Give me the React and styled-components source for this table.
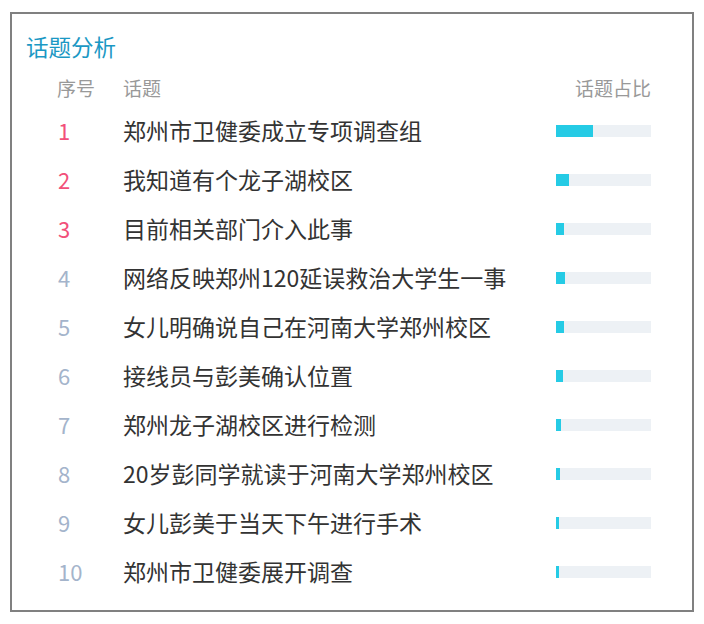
import React from "react";
import styled, { createGlobalStyle } from "styled-components";

const Global = createGlobalStyle`
  html, body { margin: 0; padding: 0; background: #fff; }
  body { font-family: "Noto Sans CJK SC", "Noto Sans", sans-serif; }
`;

const Card = styled.div`
  box-sizing: border-box;
  margin: 12px 0 0 10px;
  width: 684px;
  height: 600px;
  border: 2px solid #808080;
  padding: 17px 41px 0 14px;
  background: #fff;
`;

const Title = styled.h2`
  margin: 0;
  font-size: 22.5px;
  line-height: 30px;
  font-weight: 400;
  color: #1b98c4;
`;

const Table = styled.div`
  margin-top: 13px;
  padding-left: 31px;
`;

const Row = styled.div`
  display: grid;
  grid-template-columns: 66px 1fr 95px;
  align-items: center;
  height: ${(p) => (p.$head ? "28px" : "49px")};
  margin-bottom: ${(p) => (p.$head ? "3px" : "0")};
`;

const HeadCell = styled.div`
  font-size: 19px;
  line-height: 28px;
  color: #999;
  white-space: nowrap;
  text-align: ${(p) => (p.$right ? "right" : "left")};
`;

const Num = styled.div`
  font-size: 22px;
  color: ${(p) => (p.$top ? "#f2507a" : "#a4b4cb")};
  padding-left: 1px;
`;

const Topic = styled.div`
  font-size: 23px;
  color: #333;
  white-space: nowrap;
`;

const Track = styled.div`
  height: 12px;
  margin-top: 2px;
  background: #edf1f5;
  display: flex;
`;

const Fill = styled.div`
  height: 100%;
  background: #25cbe5;
`;

const rows = [
  ["郑州市卫健委成立专项调查组", 37],
  ["我知道有个龙子湖校区", 13],
  ["目前相关部门介入此事", 8],
  ["网络反映郑州120延误救治大学生一事", 8.5],
  ["女儿明确说自己在河南大学郑州校区", 7.5],
  ["接线员与彭美确认位置", 6.5],
  ["郑州龙子湖校区进行检测", 5],
  ["20岁彭同学就读于河南大学郑州校区", 3.5],
  ["女儿彭美于当天下午进行手术", 3],
  ["郑州市卫健委展开调查", 3],
];

export default function App() {
  return (
    <>
      <Global />
      <Card>
        <Title>话题分析</Title>
        <Table>
          <Row $head>
            <HeadCell>序号</HeadCell>
            <HeadCell>话题</HeadCell>
            <HeadCell $right>话题占比</HeadCell>
          </Row>
          {rows.map(([t, w], i) => (
            <Row key={i}>
              <Num $top={i < 3}>{i + 1}</Num>
              <Topic>{t}</Topic>
              <Track>
                <Fill style={{ width: `${w}px` }} />
              </Track>
            </Row>
          ))}
        </Table>
      </Card>
    </>
  );
}
